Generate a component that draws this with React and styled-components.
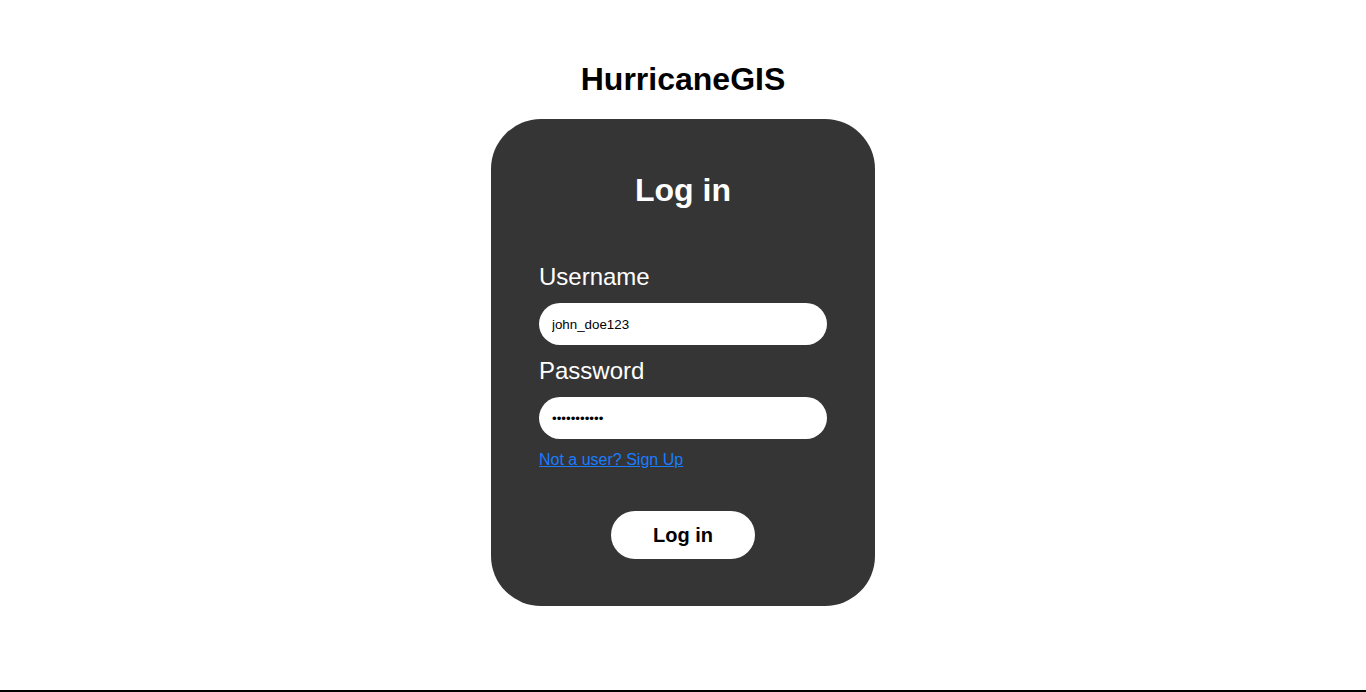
import React from 'react';
import styled, { createGlobalStyle } from 'styled-components';

const GlobalStyle = createGlobalStyle`
  html, body {
    margin: 0;
    padding: 0;
    background: #fff;
    font-family: "Liberation Sans", Arial, sans-serif;
  }
`;

const Page = styled.div`
  min-height: 100vh;
  display: flex;
  flex-direction: column;
`;

const Main = styled.main`
  flex: 1;
  display: flex;
  flex-direction: column;
  align-items: center;
  padding-top: 61px;
`;

const Title = styled.h1`
  margin: 0 0 21px;
  font-size: 32px;
  line-height: 37px;
  font-weight: bold;
  color: #000;
`;

const Card = styled.section`
  width: 384px;
  box-sizing: border-box;
  padding: 53px 48px 47px;
  background: #353535;
  border-radius: 50px;
  color: #fff;
`;

const CardHeading = styled.h2`
  margin: 0 0 54px;
  text-align: center;
  font-size: 32px;
  line-height: 37px;
  font-weight: bold;
`;

const Form = styled.form`
  display: flex;
  flex-direction: column;
`;

const Label = styled.label`
  font-size: 24px;
  line-height: 28px;
  margin-bottom: 12px;
`;

const Input = styled.input`
  height: 42px;
  box-sizing: border-box;
  border: none;
  border-radius: 21px;
  padding: 0 13px;
  margin-bottom: 12px;
  background: #fff;
  color: #000;
  font-family: "Liberation Sans", Arial, sans-serif;
  font-size: 13.333px;
  outline: none;
`;

const SignUp = styled.a`
  align-self: flex-start;
  font-size: 16px;
  line-height: 18px;
  color: #1a7cff;
  text-decoration: underline;
`;

const Submit = styled.button`
  align-self: center;
  margin-top: 42px;
  width: 144px;
  height: 48px;
  border: none;
  border-radius: 24px;
  background: #fff;
  color: #000;
  font-family: "Liberation Sans", Arial, sans-serif;
  font-size: 20px;
  font-weight: bold;
  cursor: pointer;
`;

const Footer = styled.footer`
  border-top: 2px solid #000;
`;

const App = () => {
  return (
    <Page>
      <GlobalStyle />
      <Main>
        <Title>HurricaneGIS</Title>
        <Card>
          <CardHeading>Log in</CardHeading>
          <Form onSubmit={(e) => e.preventDefault()}>
            <Label htmlFor="username">Username</Label>
            <Input id="username" type="text" defaultValue="john_doe123" />
            <Label htmlFor="password">Password</Label>
            <Input id="password" type="password" defaultValue="password123" />
            <SignUp href="#">Not a user? Sign Up</SignUp>
            <Submit type="submit">Log in</Submit>
          </Form>
        </Card>
      </Main>
      <Footer />
    </Page>
  );
};

export default App;
